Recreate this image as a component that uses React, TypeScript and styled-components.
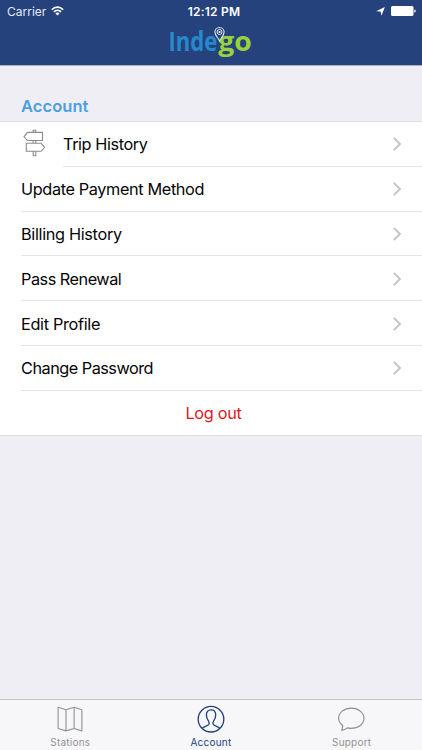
import React from "react";
import styled, { createGlobalStyle } from "styled-components";

const GlobalStyle = createGlobalStyle`
  * { box-sizing: border-box; }
  body { margin: 0; background: #efeef4; font-family: Inter, "Liberation Sans", sans-serif; }
`;

const Screen = styled.div`
  display: flex;
  flex-direction: column;
  width: 422px;
  height: 750px;
  overflow: hidden;
  background: #efeef4;
`;

const Header = styled.header`
  height: 66px;
  flex: none;
  background: #25427d;
  border-bottom: 1px solid #a9afc6;
`;

const StatusBar = styled.div`
  display: grid;
  grid-template-columns: 1fr auto 1fr;
  align-items: center;
  height: 22px;
  padding: 0 6px 0 7px;
  color: #fff;
  font-size: 12px;
`;

const Carrier = styled.div`
  display: flex;
  align-items: center;
  gap: 5px;
  color: #e4e9f3;
`;

const Clock = styled.div`
  font-weight: 600;
  letter-spacing: 0.2px;
  padding-left: 5px;
`;

const StatusIcons = styled.div`
  display: flex;
  justify-content: flex-end;
  align-items: center;
  gap: 6px;
`;

const Logo = styled.svg`
  display: block;
  margin: 2px auto 0;
`;

const LogoText = styled.text`
  font-family: "Open Sans", "Noto Sans", sans-serif;
  font-weight: 700;
  font-size: 26px;
`;

const SectionTitle = styled.h2`
  margin: 0;
  height: 55px;
  flex: none;
  padding: 29px 21px 0;
  font-size: 16.5px;
  line-height: 22px;
  font-weight: 600;
  letter-spacing: 0.05px;
  color: #4b9fe0;
`;

const List = styled.div`
  flex: none;
  background: #fff;
  border-top: 1px solid #dddde2;
  border-bottom: 1px solid #dddde2;
`;

const Row = styled.div<{ $inset?: number }>`
  position: relative;
  display: flex;
  align-items: center;
  height: 44.8px;
  padding: 0 20px 0 21px;
  font-size: 16.3px;
  color: #050505;

  &::after {
    content: "";
    position: absolute;
    left: ${(p) => p.$inset ?? 21}px;
    right: 0;
    bottom: 0;
    height: 1px;
    background: #e4e4e6;
  }
`;

const RowIcon = styled.span`
  width: 42px;
  display: flex;

  svg {
    margin-top: -2px;
  }
`;

const Label = styled.span<{ $spacing: number }>`
  flex: 1;
  letter-spacing: ${(p) => p.$spacing}px;
`;

const LogoutRow = styled.div`
  display: flex;
  align-items: center;
  justify-content: center;
  height: 44px;
  padding-left: 5px;
  font-size: 16.3px;
  letter-spacing: -0.3px;
  color: #dc1a1c;
`;

const TabBar = styled.nav`
  margin-top: auto;
  height: 51px;
  flex: none;
  display: grid;
  grid-template-columns: repeat(3, 1fr);
  background: #f7f7f9;
  border-top: 1px solid #c5c5ca;
`;

const Tab = styled.div<{ $active?: boolean }>`
  display: flex;
  flex-direction: column;
  align-items: center;
  padding-top: 5px;
  font-size: 10px;
  line-height: 14px;
  letter-spacing: 0.22px;
  color: ${(p) => (p.$active ? "#25427d" : "#929296")};

  svg {
    margin-bottom: 2px;
  }
`;

const Wifi = () => (
  <svg width="13" height="10" viewBox="0 0 13 10" fill="none" stroke="#fff" strokeWidth="1.6">
    <path d="M.8 3.7C4 .3 9 .3 12.2 3.7" />
    <path d="M2.9 5.9c2.1-2.1 5.1-2.1 7.2 0" />
    <path d="M4.4 7.4c1.2-1.1 3-1.1 4.2 0L6.5 9.6z" fill="#fff" stroke="none" />
  </svg>
);

const LocationArrow = () => (
  <svg width="9" height="9" viewBox="0 0 9 9" fill="#fff">
    <path d="M8.9.1 5.4 8.8 4.6 4.6.1 4.2z" />
  </svg>
);

const Battery = () => (
  <svg width="25" height="10" viewBox="0 0 25 10" fill="#fff">
    <rect width="22.5" height="10" rx="1.6" />
    <path d="M23.3 3.4c1.9.3 1.9 2.9 0 3.2z" />
  </svg>
);

const IndegoLogo = () => (
  <Logo width="84" height="38" viewBox="0 0 84 38">
    <LogoText transform="translate(-0.6 27.4) scale(0.85 1)" fill="#2789cc">Inde</LogoText>
    <LogoText transform="translate(49.2 27.4) scale(1.09 1)" fill="#99d13b">go</LogoText>
    <path d="M50.5 17c-1.1-3-4.6-5.1-4.6-8.9a4.6 4.6 0 0 1 9.2 0c0 3.8-3.5 5.9-4.6 8.9z" fill="#25427d" stroke="#e3e8f2" strokeWidth="1.1" />
    <circle cx="50.5" cy="8" r="2.5" fill="none" stroke="#e3e8f2" strokeWidth="1" />
    <circle cx="50.5" cy="8" r="1" fill="#fff" />
  </Logo>
);

const Signpost = () => (
  <svg width="26" height="28" viewBox="0 0 26 28" fill="none" stroke="#8c8c8c" strokeWidth="1.1">
    <path d="M12.2 3.4V1.2h2.6v2.2M12.2 11.5v2.8M14.8 11.5v2.8M12.2 22.3v4.4h2.6v-4.4" />
    <path d="M6.5 3.4h15v8.1h-15L3 7.6z" />
    <path d="M5.3 14.3h14.8l3.5 4-3.5 4H5.3z" />
  </svg>
);

const Chevron = () => (
  <svg width="10" height="16" viewBox="0 0 10 16" fill="none" stroke="#c3c3c8" strokeWidth="1.9">
    <path d="M1.8 1.8 8 8l-6.2 6.2" />
  </svg>
);

const MapIcon = () => (
  <svg width="28" height="28" viewBox="0 0 28 28" fill="none" stroke="#929296" strokeWidth="1.1" strokeLinejoin="round">
    <path d="M2.1 2.3 10 4.7l8.1-2.4 7.8 2.4v21.2l-7.8-2.4L10 25.9l-7.9-2.4zM10 4.7v21.2M18.1 2.3v21.2" />
  </svg>
);

const PersonIcon = () => (
  <svg width="28" height="28" viewBox="0 0 28 28" fill="none" stroke="#25427d" strokeWidth="1.35" strokeLinejoin="round">
    <circle cx="14" cy="14.2" r="12.8" />
    <path d="M5.2 23.4c.7-1.4 5.5-2.4 6.5-3.7.8-1.1.5-2.6-.2-3.6-1.5-2.1-2.1-3.8-2.1-6.2 0-3.3 1.9-5.1 4.7-5.1 3.1 0 4.6 1.8 4.6 5.1 0 2.4-.6 4.1-2.1 6.2-.7 1-1 2.5-.2 3.6 1 1.3 5.8 2.3 6.4 3.7" />
  </svg>
);

const BubbleIcon = () => (
  <svg width="28" height="28" viewBox="0 0 28 28" fill="none" stroke="#929296" strokeWidth="1.2" strokeLinejoin="round">
    <path d="M13.3 3.2c7.1 0 12.7 4.4 12.7 10.1S20.4 23.4 13.3 23.4c-1.5 0-2.9-.2-4.2-.5-1.7 1.5-3 2.1-5.5 2.6.8-1.5 1.1-3.2 1.1-5C2.1 18.6.6 16.1.6 13.3.6 7.6 6.2 3.2 13.3 3.2z" />
  </svg>
);

const links = [
  { label: "Update Payment Method", spacing: -0.38 },
  { label: "Billing History", spacing: -0.33 },
  { label: "Pass Renewal", spacing: -0.5 },
  { label: "Edit Profile", spacing: -0.33 },
  { label: "Change Password", spacing: -0.51 },
];

export default function App() {
  return (
    <Screen>
      <GlobalStyle />
      <Header>
        <StatusBar>
          <Carrier>Carrier<Wifi /></Carrier>
          <Clock>12:12 PM</Clock>
          <StatusIcons><LocationArrow /><Battery /></StatusIcons>
        </StatusBar>
        <IndegoLogo />
      </Header>
      <SectionTitle>Account</SectionTitle>
      <List>
        <Row $inset={63}>
          <RowIcon><Signpost /></RowIcon>
          <Label $spacing={-0.43}>Trip History</Label>
          <Chevron />
        </Row>
        {links.map((item) => (
          <Row key={item.label}>
            <Label $spacing={item.spacing}>{item.label}</Label>
            <Chevron />
          </Row>
        ))}
        <LogoutRow>Log out</LogoutRow>
      </List>
      <TabBar>
        <Tab><MapIcon />Stations</Tab>
        <Tab $active><PersonIcon />Account</Tab>
        <Tab><BubbleIcon />Support</Tab>
      </TabBar>
    </Screen>
  );
}
